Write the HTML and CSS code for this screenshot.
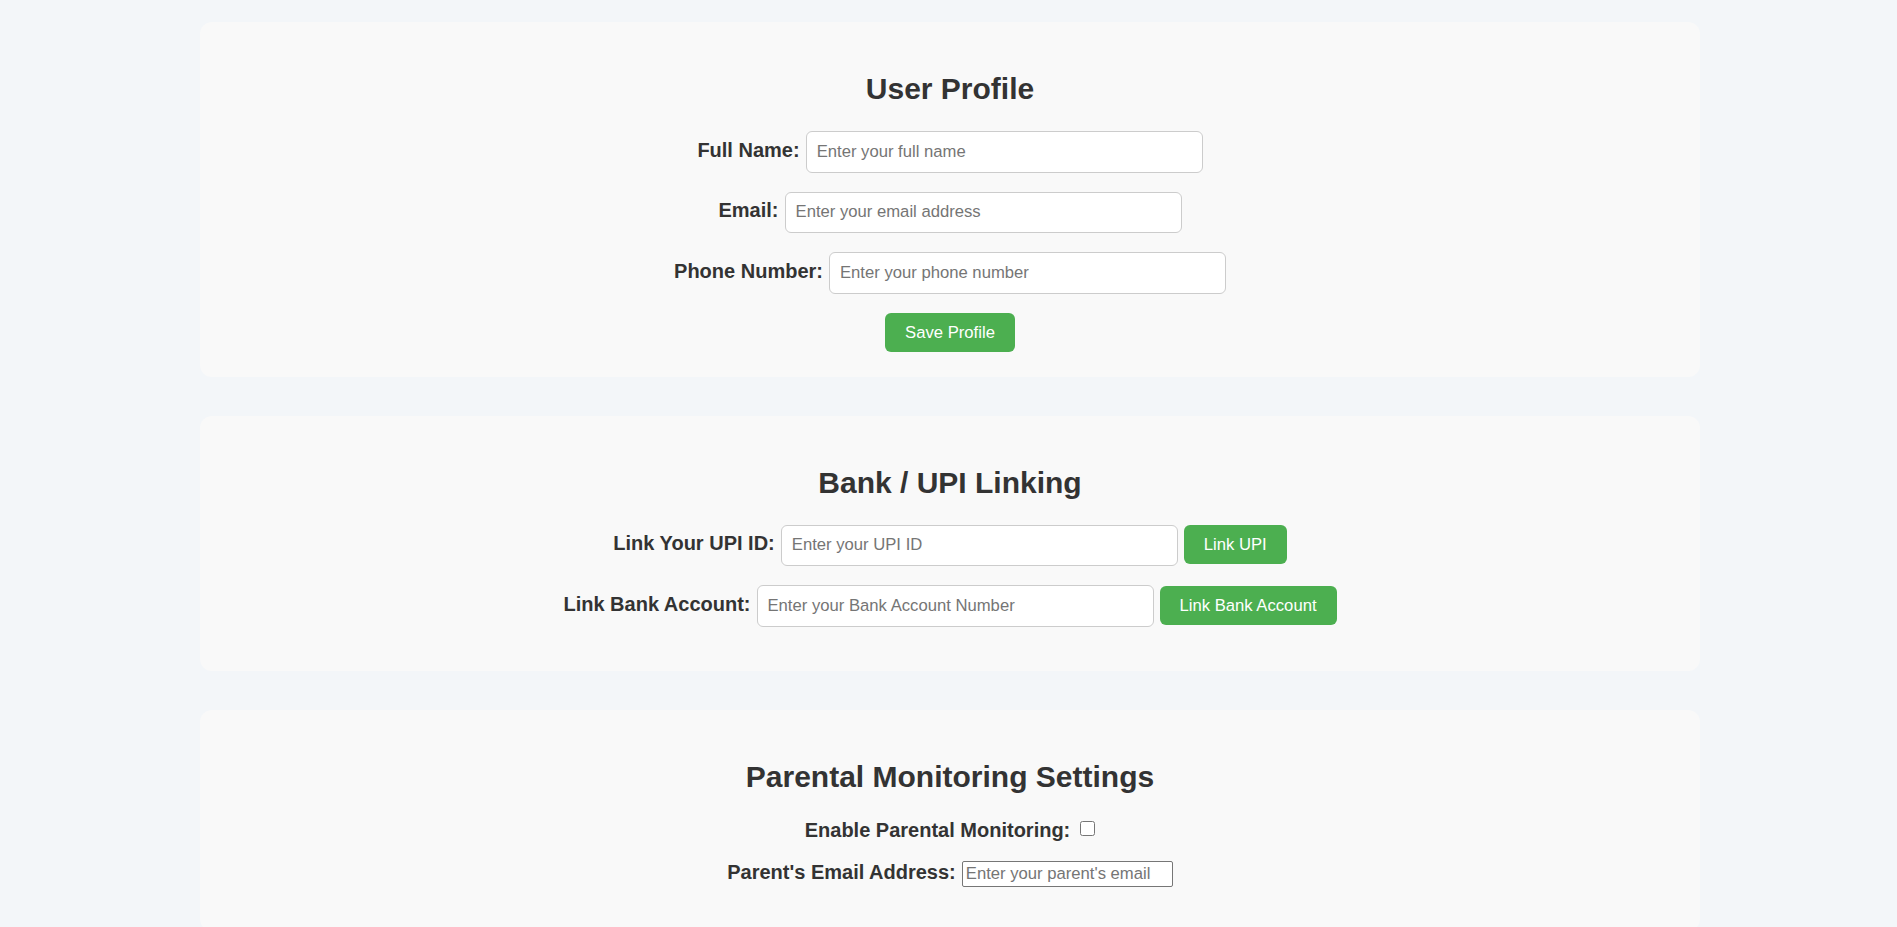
FILE: index.html
```html
<!DOCTYPE html>
<html lang="en">
<head>
<meta charset="utf-8">
<title>Settings</title>
<link rel="stylesheet" href="styles.css">
</head>
<body>
<main class="page">
  <section class="card">
    <h2 class="card-title">User Profile</h2>
    <div class="field">
      <label class="field-label" for="fullName">Full Name:</label>
      <input class="text-input" id="fullName" type="text" placeholder="Enter your full name">
    </div>
    <div class="field">
      <label class="field-label" for="email">Email:</label>
      <input class="text-input" id="email" type="email" placeholder="Enter your email address">
    </div>
    <div class="field">
      <label class="field-label" for="phone">Phone Number:</label>
      <input class="text-input" id="phone" type="text" placeholder="Enter your phone number">
    </div>
    <div class="actions">
      <button class="btn" type="button">Save Profile</button>
    </div>
  </section>

  <section class="card">
    <h2 class="card-title">Bank / UPI Linking</h2>
    <div class="field">
      <label class="field-label" for="upi">Link Your UPI ID:</label>
      <input class="text-input" id="upi" type="text" placeholder="Enter your UPI ID">
      <button class="btn" type="button">Link UPI</button>
    </div>
    <div class="field">
      <label class="field-label" for="bank">Link Bank Account:</label>
      <input class="text-input" id="bank" type="text" placeholder="Enter your Bank Account Number">
      <button class="btn" type="button">Link Bank Account</button>
    </div>
  </section>

  <section class="card">
    <h2 class="card-title">Parental Monitoring Settings</h2>
    <div class="field field-check">
      <label class="field-label" for="monitor">Enable Parental Monitoring:</label>
      <input class="check" id="monitor" type="checkbox">
    </div>
    <div class="field">
      <label class="field-label" for="parentEmail">Parent's Email Address:</label>
      <input class="plain-input" id="parentEmail" type="email" placeholder="Enter your parent's email">
    </div>
  </section>
</main>
</body>
</html>
```

FILE: styles.css
```css
html, body {
  margin: 0;
  padding: 0;
}

body {
  background: #f3f6f9;
  color: #333333;
  font-family: "Liberation Sans", Arial, sans-serif;
}

.page {
  padding: 22px 0 0 3px;
}

.card {
  box-sizing: border-box;
  width: 1500px;
  margin: 0 auto 39px;
  padding: 25px;
  background: #f9f9f9;
  border-radius: 12px;
}

.card-title {
  margin: 25px 0;
  font-size: 30px;
  line-height: 34px;
  font-weight: bold;
  text-align: center;
  color: #333333;
}

.field {
  display: flex;
  justify-content: center;
  align-items: baseline;
  gap: 6px;
  margin-bottom: 19px;
}

.field-label {
  font-size: 20px;
  line-height: 23px;
  font-weight: bold;
  color: #333333;
}

.text-input {
  box-sizing: border-box;
  width: 397px;
  height: 41.5px;
  padding: 10px;
  border: 1px solid #cccccc;
  border-radius: 6px;
  background: #ffffff;
  font-family: "Liberation Sans", Arial, sans-serif;
  font-size: 16.67px;
  color: #333333;
  outline: none;
}

.text-input::placeholder,
.plain-input::placeholder {
  color: #757575;
}

.plain-input {
  box-sizing: border-box;
  width: 211px;
  height: 26px;
  padding: 1px 3px;
  border: 1px solid #767676;
  border-radius: 2px;
  background: #ffffff;
  font-family: "Liberation Sans", Arial, sans-serif;
  font-size: 16.67px;
  color: #333333;
  outline: none;
}

.actions {
  display: flex;
  justify-content: center;
}

.btn {
  box-sizing: border-box;
  height: 39px;
  padding: 0 20px;
  border: none;
  border-radius: 6px;
  background: #4caf50;
  color: #ffffff;
  font-family: "Liberation Sans", Arial, sans-serif;
  font-size: 16.67px;
  line-height: 39px;
  cursor: pointer;
}

.field-check {
  align-items: center;
}

.check {
  width: 15px;
  height: 15px;
  margin: -3px 0 0 4px;
}
```
